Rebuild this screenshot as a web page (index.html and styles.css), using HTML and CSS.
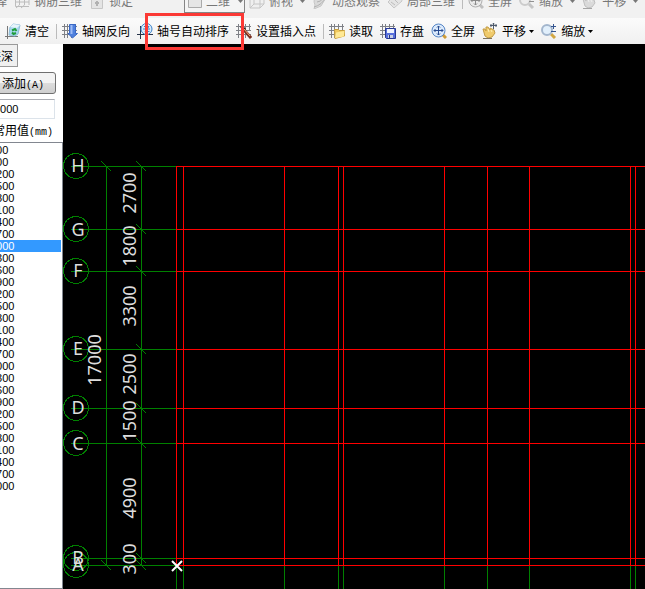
FILE: index.html
```
<!DOCTYPE html>
<html lang="zh-CN">
<head>
<meta charset="utf-8">
<title>轴网</title>
<link rel="stylesheet" href="styles.css">
</head>
<body>
<svg class="defs" aria-hidden="true">
  <symbol id="grid" viewBox="0 0 16 16"><path d="M2.500 1V15M5.500 1V15M9.500 1V15M13.500 1V7M0 3.500H15M0 7.500H15M0 11.500H15" fill="none" stroke="#7e8086"/></symbol>
  <symbol id="clear" viewBox="0 0 16 16"><path d="M2.500 3V16M0 13.500H13" stroke="#777" fill="none"/><path d="M5 4 8 1 15 2 13 11 10 13 4 12Z" fill="#a9d8ee" stroke="#8fbdd8"/><path d="M5 4 12 5 15 2 8 1Z" fill="#e6f4fb"/><path d="M7 7.500 10 6 11.500 8M11 10 8.500 11 7 9.500" fill="none" stroke="#1f9d3b" stroke-width="2"/></symbol>
  <symbol id="flip" viewBox="0 0 16 16"><use href="#grid"/><path d="M7.500 1.500H13.500V10.500H15.500L10.500 15 6 10.500H7.500Z" fill="#4f80dd" stroke="#3a68c4"/><path d="M9.500 2V11" stroke="#9fbcf5" stroke-width="2"/></symbol>
  <symbol id="renumber" viewBox="0 0 16 16"><path d="M3.500 3V16M0 11.500H16" stroke="#263349" fill="none"/><circle cx="9.500" cy="6" r="5.500" fill="#d8ecfb" stroke="#3f83c9"/><path d="M7 3.500H12L8 8.500H12.500M6 6H13" stroke="#3c82c8" fill="none"/></symbol>
  <symbol id="insert" viewBox="0 0 16 16"><use href="#grid"/><path d="M5 3 9 7" stroke="#262626" stroke-width="3"/><path d="M8 7 15 15" stroke="#7a3021" stroke-width="3"/><path d="M8 6 14 13" stroke="#f1a779" stroke-width="1"/></symbol>
  <symbol id="load" viewBox="0 0 16 16"><use href="#grid"/><path d="M5.500 6.500H9.500L10.500 7.500H15.500V13L6 15.500Z" fill="#f0c95e" stroke="#c79e3c"/><path d="M6 15 7 9.500 15.500 8 15 13.500Z" fill="#ffe995"/></symbol>
  <symbol id="save" viewBox="0 0 16 16"><use href="#grid"/><path d="M5.500 5.500H15.500V15.500H6.500L5.500 14.500Z" fill="#5870dc" stroke="#273894"/><path d="M7 6H14V10H7Z" fill="#f0f4ff"/><path d="M8 12H13V15H8Z" fill="#c9d0e4"/><path d="M9 12H10V15H9Z" fill="#26347b"/></symbol>
  <symbol id="full" viewBox="0 0 16 16"><path d="M12 12 15 15" stroke="#ce9c37" stroke-width="3"/><circle cx="7.500" cy="7.500" r="6.500" fill="#dbeafb" stroke="#5686c6"/><path d="M7.500 3V12M3 7.500H12M6 4.500 7.500 3 9 4.500M6 10.500 7.500 12 9 10.500M4.500 6 3 7.500 4.500 9M10.500 6 12 7.500 10.500 9" fill="none" stroke="#284b91"/></symbol>
  <symbol id="pan" viewBox="0 0 16 16"><path d="M11.500 0V6M8 2.500H15M10.500 1H12.500M14 1V4M9 1V4" fill="none" stroke="#4f5b6c"/><path d="M1 6 3 6 4 8 4 4 6 4 8 7 8 5 10 6 12 7 13 10 10 14 6 15 3 13Z" fill="#f0cb6c" stroke="#c29b45"/><path d="M6 6 7 9M9 7 10 9" stroke="#fff0b5"/><path d="M1 15.500H10" stroke="#7d745f"/></symbol>
  <symbol id="zoom" viewBox="0 0 16 16"><path d="M10 11 14 15" stroke="#d2a743" stroke-width="3"/><circle cx="6" cy="7" r="5" fill="#e1effb" stroke="#a3b6cd" stroke-width="2"/><path d="M12.500 1V6M10 3.500H15M10 8.500H15" stroke="#34558f" fill="none"/></symbol>
  <symbol id="box" viewBox="0 0 16 16"><path d="M1.500 3.500H14.500V14.500H1.500Z" fill="#e6e6e6" stroke="#aaa"/></symbol>
  <symbol id="cube" viewBox="0 0 16 16"><path d="M1 5 5 1H15V11L11 15H1ZM1 5H11V15M11 5 15 1M5 1V11H15M5 11 1 15" fill="#eee" stroke="#aaa"/></symbol>
  <symbol id="mesh" viewBox="0 0 16 16"><path d="M1.500 3V13.500H15M5.500 1V12L2 15M10.500 1V12L7 15M15 1V12M2 5H15M2 9H15" fill="none" stroke="#999"/></symbol>
  <symbol id="lock" viewBox="0 0 16 16"><path d="M5 7V3Q8 0 11 3V7" fill="none" stroke="#aaa" stroke-width="2"/><path d="M2.500 6.500H13.500V15.500H2.500Z" fill="#ddd" stroke="#aaa"/><path d="M8 8V13M6 10H10" stroke="#888" stroke-width="2"/></symbol>
  <symbol id="orbit" viewBox="0 0 16 16"><path d="M3 12Q0 6 6 2T15 3L9 13 2 16Z" fill="#ccc" stroke="#aaa"/><path d="M2 14Q10 12 14 4M5 9Q9 9 11 5" fill="none" stroke="#888"/></symbol>
  <symbol id="part" viewBox="0 0 16 16"><path d="M1 9 7 3 10 6 14 3 15 8 7 15Z" fill="#ddd" stroke="#aaa"/><path d="M4 9 8 12M7 6 11 10" stroke="#999"/></symbol>
  <symbol id="down" viewBox="0 0 5 3"><path d="M0 0H5L2.500 3Z" fill="currentColor"/></symbol>
</svg>

<header>
  <nav class="toolbar view-bar" aria-label="视图">
    <button class="clipped">选择</button>
    <button><svg><use href="#mesh"/></svg>钢筋三维</button>
    <button><svg><use href="#lock"/></svg>锁定</button>
    <label class="combo"><svg><use href="#box"/></svg><select aria-label="维度"><option>二维</option></select><svg class="arrow"><use href="#down"/></svg></label>
    <button><svg><use href="#cube"/></svg>俯视<svg class="arrow"><use href="#down"/></svg></button>
    <button><svg><use href="#orbit"/></svg>动态观察</button>
    <button><svg><use href="#part"/></svg>局部三维</button>
    <span class="sep"></span>
    <button><svg><use href="#full"/></svg>全屏</button>
    <button><svg><use href="#zoom"/></svg>缩放<svg class="arrow"><use href="#down"/></svg></button>
    <button><svg><use href="#pan"/></svg>平移<svg class="arrow"><use href="#down"/></svg></button>
  </nav>
  <nav class="toolbar axis-bar" aria-label="轴网">
    <button><svg><use href="#clear"/></svg>清空</button>
    <span class="sep"></span>
    <button><svg><use href="#flip"/></svg>轴网反向</button>
    <button class="marked"><svg><use href="#renumber"/></svg>轴号自动排序</button>
    <button><svg><use href="#insert"/></svg>设置插入点</button>
    <span class="sep"></span>
    <button><svg><use href="#load"/></svg>读取</button>
    <button><svg><use href="#save"/></svg>存盘</button>
    <button><svg><use href="#full"/></svg>全屏</button>
    <button><svg><use href="#pan"/></svg>平移<svg class="arrow"><use href="#down"/></svg></button>
    <button><svg><use href="#zoom"/></svg>缩放<svg class="arrow"><use href="#down"/></svg></button>
  </nav>
</header>

<main>
  <aside>
    <button class="tab">进深</button>
    <button class="add">添加<span class="mono">(A)</span></button>
    <input class="value" type="text" value="3000" aria-label="轴距">
    <div class="caption" id="common">常用值<span class="mono">(mm)</span></div>
    <ul class="values" aria-labelledby="common">
      <li>600</li><li>900</li><li>1200</li><li>1500</li><li>1800</li><li>2100</li><li>2400</li><li>2700</li>
      <li class="selected">3000</li><li>3300</li><li>3600</li><li>3900</li><li>4200</li><li>4500</li><li>4800</li>
      <li>5100</li><li>5400</li><li>5700</li><li>6000</li><li>6300</li><li>6600</li><li>6900</li><li>7200</li>
      <li>7500</li><li>7800</li><li>8100</li><li>8400</li><li>8700</li><li>9000</li>
    </ul>
  </aside>
  <section class="drawing">
    <svg class="plan" role="img" aria-label="轴网图">
      <g class="dim">
        <path d="M8 122.500H113M8 185.500H113M8 227.500H113M8 305.500H113M8 364.500H113M8 399.500H113M8 514.500H113M8 521.500H113"/>
        <path d="M43.500 122V522M78.500 122V522"/>
        <path d="M113.500 522V3000M120.500 522V3000M221.500 522V3000M275.500 522V3000M280.500 522V3000M381.500 522V3000M424.500 522V3000M466.500 522V3000M567.500 522V3000M572.500 522V3000"/>
        <path d="M38 117l10 10M73 117l10 10M73 180l10 10M73 222l10 10M73 300l10 10M73 359l10 10M73 394l10 10M73 509l10 10M73 516l10 10M38 516l10 10"/>
        <circle cx="13" cy="122" r="12.500"/><circle cx="13" cy="185" r="12.500"/><circle cx="13" cy="227" r="12.500"/><circle cx="13" cy="305" r="12.500"/><circle cx="13" cy="364" r="12.500"/><circle cx="13" cy="399" r="12.500"/><circle cx="13" cy="514" r="12.500"/><circle cx="13" cy="521" r="12.500"/>
      </g>
      <g class="axis">
        <path d="M113 122.500H4000M113 185.500H4000M113 227.500H4000M113 305.500H4000M113 364.500H4000M113 399.500H4000M113 514.500H4000M113 521.500H4000"/>
        <path d="M113.500 122V522M120.500 122V522M221.500 122V522M275.500 122V522M280.500 122V522M381.500 122V522M424.500 122V522M466.500 122V522M567.500 122V522M572.500 122V522"/>
      </g>
      <g class="names">
        <text x="15" y="128">H</text><text x="15" y="192">G</text><text x="15" y="233">F</text><text x="15" y="311">E</text><text x="15" y="370">D</text><text x="15" y="406">C</text><text x="15" y="520">B</text><text x="15" y="527">A</text>
      </g>
      <g class="sizes">
        <text transform="translate(73 149) rotate(-90)">2700</text>
        <text transform="translate(73 202) rotate(-90)">1800</text>
        <text transform="translate(73 262) rotate(-90)">3300</text>
        <text transform="translate(73 330) rotate(-90)">2500</text>
        <text transform="translate(73 377) rotate(-90)">1500</text>
        <text transform="translate(73 454) rotate(-90)">4900</text>
        <text transform="translate(73 515) rotate(-90)">300</text>
        <text transform="translate(38 316) rotate(-90)">17000</text>
      </g>
      <path class="origin" d="M109 517l10 10M119 517l-10 10"/>
    </svg>
  </section>
</main>
</body>
</html>
```
FILE: styles.css
```
* { box-sizing: border-box; }

body {
  margin: 0;
  height: 100vh;
  display: flex;
  flex-direction: column;
  overflow: hidden;
  background: #fff;
  color: #000;
  font: 12px/16px "Noto Sans CJK SC", sans-serif;
}

.defs { position: absolute; width: 0; height: 0; }

button, input, select { font: inherit; color: inherit; }

.toolbar {
  display: flex;
  align-items: center;
  gap: 7px;
  white-space: nowrap;
}

.toolbar button {
  display: flex;
  flex: none;
  align-items: center;
  gap: 4px;
  padding: 0;
  border: 0;
  background: none;
}

.toolbar svg { flex: none; width: 16px; height: 16px; }
.toolbar .arrow { width: 5px; height: 3px; }
.axis-bar .arrow { margin-left: -1px; }

.sep {
  flex: none;
  width: 1px;
  height: 15px;
  margin-right: -2px;
  background: #bbb;
}

/* The upper bar is scrolled half out of the window. */
.view-bar {
  height: 34px;
  margin-top: -16px;
  background: #f1f1f1;
  color: #777;
}

.view-bar button > svg:first-child { filter: grayscale(1); opacity: .6; }
.view-bar .arrow { margin-left: 3px; }
.view-bar .clipped { margin-left: -17px; }

.combo {
  display: flex;
  align-items: center;
  gap: 3px;
  width: 61px;
  height: 24px;
  margin: 0 -3px 0 44px;
  padding-left: 2px;
  border: 1px solid #858585;
  background: #f4f4f4;
}

.combo select { width: 26px; padding: 0; border: 0; background: none; appearance: none; }

.axis-bar {
  height: 26px;
  padding-left: 5px;
  background: linear-gradient(#fbfbfb, #f0f0f0);
}

.marked { position: relative; }

.marked::after {
  content: "";
  position: absolute;
  inset: -10px -15px -11px 8px;
  border: 3px solid #fb3935;
  z-index: 1;
}

main { display: flex; flex: 1; min-height: 0; }

aside {
  display: flex;
  flex: none;
  flex-direction: column;
  align-items: flex-start;
  width: 63px;
  overflow: hidden;
}

.mono { font-family: "Liberation Mono", monospace; font-size: 10px; line-height: 1; }

.tab {
  height: 23px;
  margin-left: -16px;
  padding: 0 4px;
  border: 1px solid #999;
  background: #f0f0f0;
}

.add {
  width: 76px;
  height: 22px;
  margin: 5px 0 5px -20px;
  padding: 0 11px 0 0;
  border: 1px solid #707070;
  border-radius: 3px;
  background: linear-gradient(#f3f3f3 50%, #ddd 50%, #cfcfcf);
  text-align: right;
}

.value {
  width: 75px;
  height: 20px;
  margin-left: -20px;
  padding: 0 0 0 13px;
  border: 1px solid #dce3ea;
  border-top-color: #abadb3;
  font: 11px/16px "Liberation Sans", sans-serif;
}

.caption { margin: 3px 0 4px -7px; white-space: nowrap; }

.values {
  flex: 1;
  width: 83px;
  margin: 0 0 0 -20px;
  padding: 1px 1px 0 0;
  border: 1px solid #828790;
  list-style: none;
  font: 11px/12px "Liberation Sans", sans-serif;
}

.values li { padding-left: 9px; }
.values .selected { background: #3399ff; color: #fff; }

.drawing { flex: 1; min-width: 0; background: #000; }

.plan { display: block; width: 100%; height: 100%; }

.dim, .axis { fill: none; shape-rendering: crispEdges; }
.dim { stroke: #008000; }
.axis { stroke: #f00; }

.names, .sizes {
  fill: #ddd;
  font-family: "Noto Sans", sans-serif;
  font-size: 18px;
  text-anchor: middle;
}

.origin { stroke: #fff; stroke-width: 2; }
```
